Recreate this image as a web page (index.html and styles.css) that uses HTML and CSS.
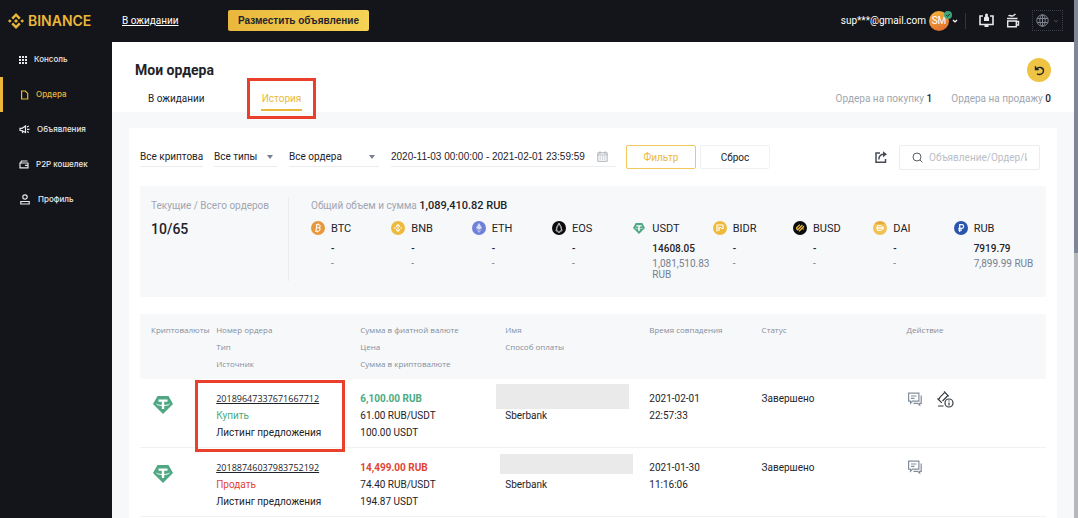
FILE: index.html
```html
<!DOCTYPE html>
<html lang="ru">
<head>
    <meta charset="UTF-8">
    <meta name="viewport" content="width=device-width, initial-scale=1.0">
    <title>Мои ордера</title>
    <link rel="stylesheet" href="styles.css">
</head>
<body>
    <svg class="sprite" aria-hidden="true">
        <symbol id="tether" viewBox="0 0 20 18">
            <path d="M4.500 0h11L20 8l-10 10L0 8z" fill="#4fa783"/>
            <path d="M5.500 3.500h9v2.300h-3.300v7.200H8.800V5.800H5.500z" fill="#fff"/>
            <path d="M3.500 8c1.500 2 11.500 2 13 0" fill="none" stroke="#fff" stroke-width="1"/>
        </symbol>
        <symbol id="bnb" viewBox="0 0 24 24">
            <path d="M12 0l7 7-2.700 2.700L12 5.400 7.700 9.700 5 7zM12 24l7-7-2.700-2.700-4.300 4.300-4.300-4.300L5 17zM0 12l2.700-2.700L5.400 12l-2.700 2.700zM24 12l-2.700-2.700-2.700 2.700 2.700 2.700zM12 9l3 3-3 3-3-3z"/>
        </symbol>
        <symbol id="chat" viewBox="0 0 16 16">
            <g fill="none" stroke="#848e9c" stroke-width="1.200">
                <path d="M1.600 2.200h10.300v8H5.500l-2 2v-2H1.600z"/>
                <path d="M14.200 4.500v7.800h-1.500v1.800l-2-1.800H6.500"/>
                <path d="M4 5h5.500M4 7.300h3.500"/>
            </g>
        </symbol>
    </svg>

    <div class="app">
        <header class="header">
            <a class="logo" href="#">
                <svg width="16" height="16" fill="#eab839"><use href="#bnb"/></svg>
                <span>BINANCE</span>
            </a>
            <a class="pending-link" href="#">В ожидании</a>
            <button class="post-btn" type="button">Разместить объявление</button>
            <div class="account">
                <span class="email">sup***@gmail.com</span>
                <span class="avatar">SM
                    <svg class="verified" width="8" height="8" viewBox="0 0 8 8"><circle cx="4" cy="4" r="4" fill="#3fa67a"/><path d="M2.200 4l1.300 1.300L6 3" fill="none" stroke="#14151a" stroke-width="0.900"/></svg>
                </span>
                <svg class="chevron" width="6" height="6" viewBox="0 0 6 6"><path d="M1 2l2 2 2-2" fill="none" stroke="#fff" stroke-width="1.200"/></svg>
                <span class="split"></span>
                <button class="icon-btn" type="button" aria-label="Загрузки">
                    <svg width="15" height="15" viewBox="0 0 15 15"><path d="M4 3H1v8.500h13V3h-3" fill="none" stroke="#e6e8ea" stroke-width="1.600"/><path d="M5.500 12h4v2h-4zM5 8V4.500L6.500 3h2L10 4.500V8z" fill="#e6e8ea"/><circle cx="7.500" cy="2" r="1.500" fill="#e6e8ea"/></svg>
                </button>
                <button class="icon-btn" type="button" aria-label="Поддержка">
                    <svg width="14" height="15" viewBox="0 0 14 15"><g fill="none" stroke="#e6e8ea" stroke-width="1.400"><path d="M1.700 8h8.600v5.800H1.700zM1 5.500h10.500M10.500 8.500h2v3.500h-2M2.500 3c2-2 3 1.500 5-.5l2-1.500"/></g></svg>
                </button>
                <button class="lang-btn" type="button" aria-label="Язык">
                    <svg width="13" height="13" viewBox="0 0 13 13"><g fill="none" stroke="#7d838e"><circle cx="6.500" cy="6.500" r="5.700"/><ellipse cx="6.500" cy="6.500" rx="2.700" ry="5.700"/><path d="M1.300 4.500h10.400M1.300 8.500h10.400M6.500 1v11"/></g></svg>
                    <svg width="6" height="6" viewBox="0 0 6 6"><path d="M1 2l2 2 2-2" fill="none" stroke="#474d57"/></svg>
                </button>
            </div>
        </header>

        <div class="body">
            <nav class="sidebar">
                <a href="#">
                    <svg width="8" height="8" viewBox="0 0 8 8" fill="#e6e8ea"><path d="M0 0h2v2H0zM3 0h2v2H3zM6 0h2v2H6zM0 3h2v2H0zM3 3h2v2H3zM6 3h2v2H6zM0 6h2v2H0zM3 6h2v2H3zM6 6h2v2H6z"/></svg>
                    Консоль
                </a>
                <a class="active" href="#">
                    <svg width="9" height="10" viewBox="0 0 9 10"><path d="M1.600 1h3.700l2.400 2.400V9H1.600z" fill="none" stroke="#eab839" stroke-width="1.200"/></svg>
                    Ордера
                </a>
                <a href="#">
                    <svg width="11" height="9" viewBox="0 0 11 9"><g fill="none" stroke="#e6e8ea" stroke-width="1.200"><path d="M1 3.300h2L6.500 1v6.500L3 5.500H1zM3 5.500l.8 2.700M8 4.300h2.500M8 2l1.800-1M8 6.500l1.800 1"/></g></svg>
                    Объявления
                </a>
                <a href="#">
                    <svg width="10" height="9" viewBox="0 0 10 9"><path d="M1 2.500V7.800h8V3H1.500L2.500 1h6M9 5.300H6" fill="none" stroke="#e6e8ea" stroke-width="1.200"/></svg>
                    P2P кошелек
                </a>
                <a href="#">
                    <svg width="12" height="11" viewBox="0 0 12 11"><g fill="none" stroke="#e6e8ea" stroke-width="1.200"><circle cx="6" cy="3" r="2.200"/><path d="M1.800 10V7.500h8.400V10z"/></g></svg>
                    Профиль
                </a>
            </nav>

            <main class="main">
                <section class="page-head">
                    <div class="title-row">
                        <h1>Мои ордера</h1>
                        <button class="refresh" type="button" aria-label="Обновить">
                            <svg width="11" height="11" viewBox="0 0 11 11"><path d="M1.500 1.200v3.300h3.300M1.800 4.300C4.500 1 9.500 2.300 9.500 5.800S5.500 10.300 3 8.800" fill="none" stroke="#1e2329" stroke-width="1.400"/></svg>
                        </button>
                    </div>
                    <div class="tab-row">
                        <a class="tab" href="#">В ожидании</a>
                        <a class="tab tab-current" href="#"><span>История</span></a>
                        <p class="stats">
                            <span>Ордера на покупку <b>1</b></span>
                            <span>Ордера на продажу <b>0</b></span>
                        </p>
                    </div>
                </section>

                <section class="panel">
                    <form class="filters">
                        <div class="field field-crypto">
                            <select aria-label="Криптовалюта"><option>Все криптовалюты</option></select>
                        </div>
                        <div class="field field-type">
                            <select aria-label="Тип"><option>Все типы</option></select>
                            <i class="arrow"></i>
                        </div>
                        <div class="field field-order">
                            <select aria-label="Ордера"><option>Все ордера</option></select>
                            <i class="arrow"></i>
                        </div>
                        <div class="field field-date">
                            <input type="text" aria-label="Период" value="2020-11-03 00:00:00 - 2021-02-01 23:59:59">
                            <svg width="11" height="11" viewBox="0 0 11 11"><g fill="none" stroke="#a3a9b3" stroke-width="0.900"><path d="M.8 1.800h9.400v8.500H.8zM.8 4h9.400M3 .3v2.500M8 .3v2.500"/><path d="M2.500 6h6M2.500 8h6" stroke-dasharray="1.400 0.900"/></g></svg>
                        </div>
                        <button class="btn btn-filter" type="button">Фильтр</button>
                        <button class="btn" type="reset">Сброс</button>
                        <button class="export" type="button" aria-label="Экспорт">
                            <svg width="12" height="12" viewBox="0 0 12 12"><path d="M5 2H1v9.200h9.500V8M3.800 8.500C4 5 6 3.300 9 3.300" fill="none" stroke="#474d57" stroke-width="1.500"/><path d="M8 .3l4 3-4 3z" fill="#474d57"/></svg>
                        </button>
                        <label class="search">
                            <svg width="11" height="11" viewBox="0 0 11 11"><g fill="none" stroke="#5b6068"><circle cx="5" cy="5" r="4"/><path d="M8 8l2.300 2.300"/></g></svg>
                            <input type="text" aria-label="Поиск" placeholder="Объявление/Ордер/Имя">
                        </label>
                    </form>

                    <div class="summary">
                        <div class="orders-count">
                            <span class="label">Текущие / Всего ордеров</span>
                            <strong>10/65</strong>
                        </div>
                        <div class="volume">
                            <p class="total"><span class="label">Общий объем и сумма</span> <b>1,089,410.82 RUB</b></p>
                            <div class="coins">
                                <div class="coin">
                                    <svg viewBox="0 0 14 14"><circle cx="7" cy="7" r="7" fill="#e8973a"/><path d="M5.800 3.500L4.900 10.500M4.800 3.800h3c2 0 1.800 3-.3 3H5.500h2.200c2.200 0 1.700 3.400-.7 3.400H4M7.300 2.500v1.300M6.500 10v1.500" fill="none" stroke="#fff" stroke-width="1.100"/></svg>
                                    <div><h3>BTC</h3><b>-</b><small>-</small></div>
                                </div>
                                <div class="coin">
                                    <svg viewBox="0 0 14 14"><circle cx="7" cy="7" r="7" fill="#edba3e"/><use href="#bnb" x="3" y="3" width="8" height="8" fill="#fff"/></svg>
                                    <div><h3>BNB</h3><b>-</b><small>-</small></div>
                                </div>
                                <div class="coin">
                                    <svg viewBox="0 0 14 14"><circle cx="7" cy="7" r="7" fill="#6f80d8"/><path d="M7 2l3 5-3 1.800L4 7z" fill="#d9ddf3"/><path d="M4 7.900l3 1.800 3-1.800L7 12z" fill="#b9c0e8"/></svg>
                                    <div><h3>ETH</h3><b>-</b><small>-</small></div>
                                </div>
                                <div class="coin">
                                    <svg viewBox="0 0 14 14"><circle cx="7" cy="7" r="7" fill="#0b0c0e"/><path d="M7 2.200L4.800 5.500 4 9.800l3 1.800 3-1.800-.8-4.300zM7 2.200L4 9.800M7 2.200l3 7.600M5 8.500l2 3 2-3" fill="none" stroke="#d5d7da" stroke-width="0.700"/></svg>
                                    <div><h3>EOS</h3><b>-</b><small>-</small></div>
                                </div>
                                <div class="coin">
                                    <svg viewBox="0 0 14 14"><use href="#tether" x="1" y="2" width="12" height="11"/></svg>
                                    <div><h3>USDT</h3><b>14608.05</b><small>1,081,510.83 RUB</small></div>
                                </div>
                                <div class="coin">
                                    <svg viewBox="0 0 14 14"><circle cx="7" cy="7" r="7" fill="#edba3e"/><path d="M4 10.500V4h6v3.500H8M6 10V6.500h2" fill="none" stroke="#fff" stroke-width="1.200"/></svg>
                                    <div><h3>BIDR</h3><b>-</b><small>-</small></div>
                                </div>
                                <div class="coin">
                                    <svg viewBox="0 0 14 14"><circle cx="7" cy="7" r="7" fill="#0b0c0e"/><path d="M3.200 7.200l3.600-3.600M4.200 9.200l5.200-5.200M6 10.200l5-5M3.200 7.200l1 1M9.600 7.800l1 .2" fill="none" stroke="#edba3e" stroke-width="1.300"/></svg>
                                    <div><h3>BUSD</h3><b>-</b><small>-</small></div>
                                </div>
                                <div class="coin">
                                    <svg viewBox="0 0 14 14"><circle cx="7" cy="7" r="7" fill="#f2c155"/><path d="M1.500 3a7 7 0 0 1 11 0z" fill="#e9a93c"/><path d="M4.500 4.500h2.500c3.500 0 3.500 5 0 5H4.500zM3 6.300h8M3 7.800h8" fill="none" stroke="#fff" stroke-width="0.900"/></svg>
                                    <div><h3>DAI</h3><b>-</b><small>-</small></div>
                                </div>
                                <div class="coin">
                                    <svg viewBox="0 0 14 14"><circle cx="7" cy="7" r="7" fill="#2a55ad"/><path d="M5.700 11V3.700h2.200c2.300 0 2.300 3.600 0 3.600H4.300M4.300 9.200h3.700" fill="none" stroke="#fff" stroke-width="1.200"/></svg>
                                    <div><h3>RUB</h3><b>7919.79</b><small>7,899.99 RUB</small></div>
                                </div>
                            </div>
                        </div>
                    </div>

                    <table class="orders">
                        <thead>
                            <tr>
                                <th class="col-coin">Криптовалюты</th>
                                <th class="col-order">Номер ордера<br>Тип<br>Источник</th>
                                <th class="col-sum">Сумма в фиатной валюте<br>Цена<br>Сумма в криптовалюте</th>
                                <th class="col-name">Имя<br>Способ оплаты</th>
                                <th class="col-time">Время совпадения</th>
                                <th class="col-status">Статус</th>
                                <th>Действие</th>
                            </tr>
                        </thead>
                        <tbody>
                            <tr>
                                <td class="coin-cell"><svg width="20" height="18"><use href="#tether"/></svg></td>
                                <td><a href="#">20189647337671667712</a><br><span class="buy">Купить</span><br>Листинг предложения<i class="mark"></i></td>
                                <td><b class="buy">6,100.00 RUB</b><br>61.00 RUB/USDT<br>100.00 USDT</td>
                                <td><i class="hidden-name"></i><br>Sberbank</td>
                                <td>2021-02-01<br>22:57:33</td>
                                <td>Завершено</td>
                                <td>
                                    <div class="actions">
                                        <button type="button" aria-label="Чат"><svg width="16" height="16"><use href="#chat"/></svg></button>
                                        <button type="button" aria-label="Апелляция"><svg width="18" height="18" viewBox="0 0 18 18"><g fill="none" stroke="#33383f" stroke-width="1.200"><path d="M3.300 7.800L8.300 2.800M6.500 11l5-5M1.500 8.500l4.300 4.300M2.300 9.500l1.800-1.800M8 1.500l4.800 4.800M2 16h5.500"/><circle cx="13" cy="13" r="4"/><path d="M13 12.500v3M13 10.500v1"/></g></svg></button>
                                    </div>
                                </td>
                            </tr>
                            <tr>
                                <td class="coin-cell"><svg width="20" height="18"><use href="#tether"/></svg></td>
                                <td><a href="#">20188746037983752192</a><br><span class="sell">Продать</span><br>Листинг предложения</td>
                                <td><b class="sell">14,499.00 RUB</b><br>74.40 RUB/USDT<br>194.87 USDT</td>
                                <td><i class="hidden-name hidden-name-short"></i><br>Sberbank</td>
                                <td>2021-01-30<br>11:16:06</td>
                                <td>Завершено</td>
                                <td>
                                    <div class="actions">
                                        <button type="button" aria-label="Чат"><svg width="16" height="16"><use href="#chat"/></svg></button>
                                    </div>
                                </td>
                            </tr>
                        </tbody>
                    </table>
                </section>
            </main>
        </div>
    </div>
    <div class="scrollbar"><div class="thumb"></div></div>
</body>
</html>
```

FILE: styles.css
```css
* {
    box-sizing: border-box;
}

body {
    margin: 0;
    display: flex;
    min-height: 100vh;
    background: #14151a;
    color: #1e2329;
    font-family: Roboto, 'Liberation Sans', sans-serif;
    font-size: 10px;
    line-height: 17px;
}

a {
    color: inherit;
    text-decoration: none;
}

button {
    padding: 0;
    border: none;
    background: none;
    font: inherit;
    color: inherit;
    cursor: pointer;
}

svg {
    display: block;
    flex-shrink: 0;
}

.sprite {
    position: absolute;
    width: 0;
    height: 0;
}

.app {
    flex: 1;
    min-width: 0;
    display: flex;
    flex-direction: column;
}

.scrollbar {
    width: 4px;
    background: #b7b8bc;
}

.thumb {
    height: 253px;
    background: #7f8796;
}

/* header */
.header {
    display: flex;
    align-items: center;
    height: 42px;
    padding: 0 11px 1px 8px;
    color: #fff;
}

.logo {
    display: flex;
    align-items: center;
    gap: 4px;
    width: 114px;
    color: #eab839;
    font-family: Inter, sans-serif;
    font-size: 14px;
    font-weight: 600;
}

.pending-link {
    width: 106px;
    text-decoration: underline;
}

.post-btn {
    height: 21px;
    padding: 0 10px;
    border-radius: 2px;
    background: linear-gradient(90deg, #e9b73c, #f5d355);
    color: #1e2329;
    font-family: 'Liberation Sans', sans-serif;
    font-weight: 700;
}

.account {
    display: flex;
    align-items: center;
    margin-left: auto;
}

.avatar {
    position: relative;
    width: 20px;
    height: 20px;
    margin: 0 3px;
    border-radius: 50%;
    background: linear-gradient(160deg, #f3b93c, #e0682c);
    line-height: 20px;
    text-align: center;
}

.verified {
    position: absolute;
    top: 0;
    right: -3px;
}

.split {
    width: 1px;
    height: 16px;
    margin: 0 13px 0 7px;
    background: #33363d;
}

.icon-btn {
    margin-right: 12px;
}

.lang-btn {
    display: flex;
    align-items: center;
    justify-content: center;
    gap: 4px;
    width: 31px;
    height: 21px;
    border: 1px dotted #3c4048;
}

/* sidebar */
.body {
    flex: 1;
    display: flex;
}

.sidebar {
    width: 112px;
    color: #e6e8ea;
    font-family: Inter, sans-serif;
    font-size: 8px;
    font-weight: 500;
}

.sidebar a {
    display: flex;
    align-items: center;
    gap: 7px;
    height: 35px;
    padding-left: 19px;
}

.sidebar .active {
    padding-left: 17px;
    border-left: 3px solid #eab839;
    color: #eab839;
}

/* page title and tabs */
.main {
    flex: 1;
    min-width: 0;
    display: flex;
    flex-direction: column;
    background: #f7f8fa;
}

.page-head {
    height: 70px;
    padding: 16px 23px 0;
    background: #fff;
}

.title-row {
    display: flex;
    justify-content: space-between;
    align-items: center;
    height: 24px;
}

h1 {
    margin: 0;
    font-size: 14px;
    font-weight: 700;
}

.refresh {
    display: grid;
    place-items: center;
    width: 24px;
    height: 24px;
    border-radius: 50%;
    background: #efc343;
}

.tab-row {
    display: flex;
    align-items: center;
    height: 32px;
}

.tab {
    width: 112px;
    padding-left: 13px;
}

.tab-current {
    display: grid;
    place-items: center;
    align-self: flex-start;
    width: 69px;
    height: 41px;
    margin-top: -4px;
    padding: 0;
    border: 3px solid #ea3f2b;
    color: #eab839;
}

.tab-current span {
    padding: 3px 1px 0;
    border-bottom: 2px solid #eab839;
    line-height: 20px;
}

.stats {
    display: flex;
    gap: 19px;
    margin: 0 0 0 auto;
    color: #a0a6b1;
}

.stats b {
    color: #1e2329;
    font-weight: 500;
}

/* filters */
.panel {
    flex: 1;
    margin: 16px 17px 0;
    padding: 17px 11px 0;
    background: #fff;
}

.filters {
    display: flex;
    align-items: center;
    height: 24px;
    margin-bottom: 17px;
}

.field {
    display: flex;
    align-items: center;
    height: 20px;
    border-bottom: 1px solid #eaecef;
}

.field select,
.field input {
    flex: 1;
    min-width: 0;
    padding: 0;
    border: none;
    background: none;
    color: #1e2329;
    font-family: inherit;
    font-size: 10px;
    appearance: none;
    outline: none;
    overflow: hidden;
}

.field-crypto {
    width: 63px;
    margin-right: 11px;
}

.field-type {
    width: 63px;
    margin-right: 12px;
}

.field-order {
    width: 90px;
    margin-right: 12px;
}

.field-date {
    width: 225px;
    margin-right: 10px;
    padding-right: 8px;
}

.field-date input {
    font-family: 'Liberation Sans', sans-serif;
}

.arrow {
    margin-right: 4px;
    border: 3px solid transparent;
    border-top: 4px solid #76808f;
    border-bottom: none;
}

.btn {
    width: 70px;
    height: 24px;
    border: 1px solid #f0f1f3;
    border-radius: 2px;
}

.btn-filter {
    margin-right: 4px;
    border-color: #f0c95c;
    color: #eab839;
}

.export {
    margin: 0 12px 0 auto;
}

.search {
    display: flex;
    align-items: center;
    gap: 6px;
    width: 141px;
    height: 25px;
    margin-right: 6px;
    padding: 0 12px;
    border: 1px solid #eaecef;
    border-radius: 2px;
}

.search input {
    flex: 1;
    min-width: 0;
    padding: 0;
    border: none;
    outline: none;
    font-family: inherit;
    font-size: 10px;
}

.search input::placeholder {
    color: #b9bec7;
}

/* totals */
.summary {
    display: flex;
    min-height: 111px;
    margin-bottom: 17px;
    padding: 11px 12px 16px 11px;
    background: #f7f8fa;
}

.label {
    color: #a0a6b1;
}

.orders-count {
    display: flex;
    flex-direction: column;
    gap: 7px;
    width: 138px;
    border-right: 1px solid #eaecef;
}

.orders-count strong {
    font-size: 14px;
    font-weight: 500;
}

.volume {
    flex: 1;
    padding-left: 22px;
}

.total {
    margin: 0 0 7px;
}

.total b {
    font-size: 11px;
    font-weight: 500;
}

.coins {
    display: grid;
    grid-template-columns: repeat(9, minmax(0, 1fr));
}

.coin {
    display: flex;
    gap: 6px;
    line-height: 12px;
}

.coin svg {
    width: 14px;
    height: 14px;
}

.coin h3,
.coin b,
.coin small {
    display: block;
    margin: 0;
    font-size: 11px;
    font-weight: 400;
}

.coin h3 {
    margin-bottom: 7px;
    line-height: 15px;
}

.coin b {
    margin-bottom: 3px;
    font-size: 10px;
    font-weight: 500;
}

.coin small {
    color: #76808f;
    font-size: 10px;
    line-height: 11px;
}

/* orders table */
.orders {
    width: 100%;
    table-layout: fixed;
    border-collapse: collapse;
}

.orders thead {
    background: #f7f8fa;
}

.orders th,
.orders td {
    padding: 7px 0 7px 11px;
    vertical-align: top;
    text-align: left;
}

.orders th {
    color: #848e9c;
    font-family: 'Open Sans', sans-serif;
    font-size: 8px;
    font-weight: 400;
    white-space: nowrap;
}

.orders td {
    position: relative;
    padding: 11px 0 6px 11px;
    border-bottom: 1px solid #f1f2f4;
}

.col-coin { width: 7.2%; }
.col-order { width: 15.9%; }
.col-sum { width: 16%; }
.col-name { width: 15.9%; }
.col-time { width: 12.4%; }
.col-status { width: 16%; }

.orders td a {
    font-family: 'Open Sans', sans-serif;
    font-size: 9px;
    font-weight: 500;
    line-height: 16px;
    text-decoration: underline;
}

.orders b {
    font-weight: 700;
}

.orders .coin-cell {
    padding: 17px 13px;
}

.buy { color: #4bab80; }
.sell { color: #e1452f; }

.hidden-name {
    position: absolute;
    top: 5px;
    left: 2px;
    width: 133px;
    height: 25px;
    background: #eaeaea;
}

.hidden-name-short {
    top: 6px;
    left: 6px;
    height: 20px;
}

/* red frame round the order number */
.mark {
    position: absolute;
    z-index: 1;
    top: 1px;
    left: -10px;
    width: 150px;
    height: 72px;
    border: 3px solid #ea3f2b;
}

.actions {
    display: flex;
    gap: 13px;
}
```
